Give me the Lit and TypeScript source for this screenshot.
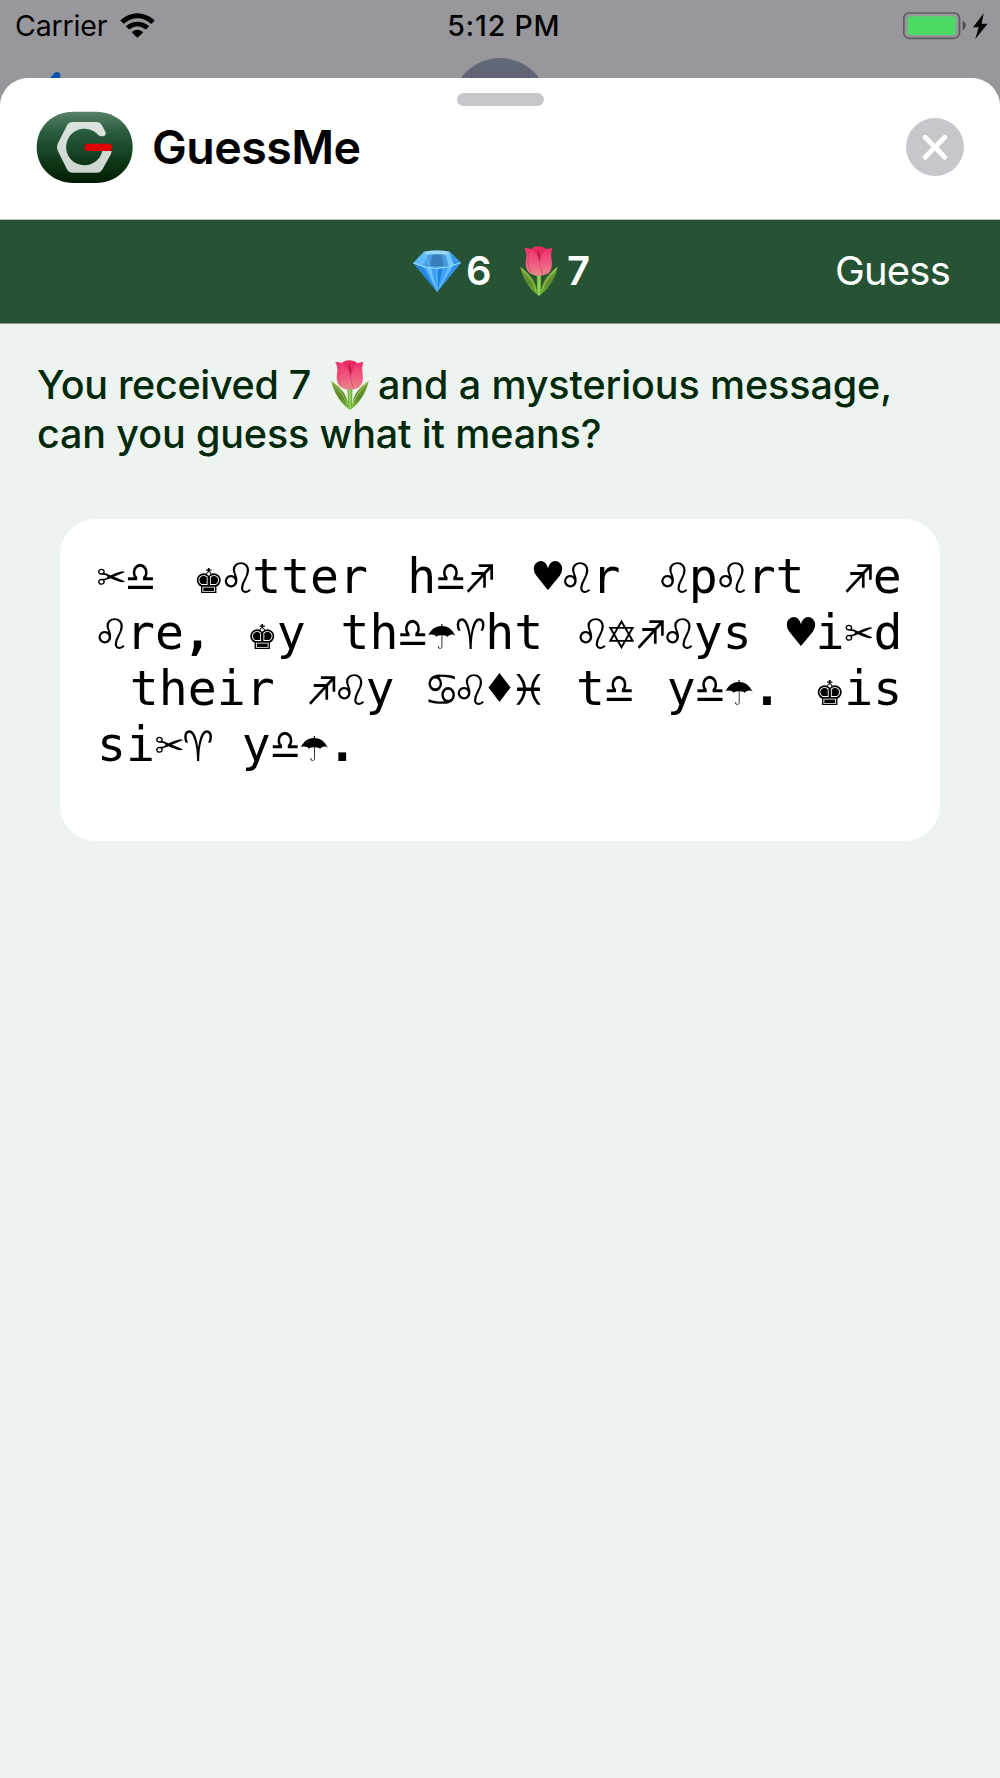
import { LitElement, html, css } from "lit";
import { customElement, property } from "lit/decorators.js";

@customElement("tulip-icon")
class TulipIcon extends LitElement {
  static styles = css`
    :host { display: block; flex: none; width: 38px; height: 50px; }
    svg { display: block; width: 38px; height: 50px; }
  `;
  render() {
    return html`<svg viewBox="0 0 114 150">
      <defs>
        <linearGradient id="petal" x1="0" y1="0" x2="0" y2="1">
          <stop offset="0" stop-color="#f0326c" /><stop offset="0.5" stop-color="#f2567f" /><stop offset="1" stop-color="#e58a8a" />
        </linearGradient>
        <linearGradient id="leaf" x1="0" y1="0" x2="0" y2="1">
          <stop offset="0" stop-color="#7da83e" /><stop offset="0.6" stop-color="#5c8a2c" /><stop offset="1" stop-color="#6fb52f" />
        </linearGradient>
        <linearGradient id="stem" x1="0" y1="0" x2="1" y2="0">
          <stop offset="0" stop-color="#57982c" /><stop offset="0.5" stop-color="#a6df6b" /><stop offset="1" stop-color="#4f9a2a" />
        </linearGradient>
      </defs>
      <path d="M50 86H64L63 146Q57 151 51 146Z" fill="url(#stem)" />
      <path d="M1 62C18 75 43 94 49 122L52 145C37 136 9 105 1 62Z" fill="url(#leaf)" />
      <path d="M113 62C96 75 71 94 66 122L62 145C77 136 105 105 113 62Z" fill="url(#leaf)" />
      <path d="M3 65C18 82 38 101 49 135" fill="none" stroke="#a3c953" stroke-width="3" />
      <path d="M111 65C96 82 76 101 65 135" fill="none" stroke="#b0d34a" stroke-width="3" />
      <path d="M31 11Q41 1 54 1Q69 1 81 11L74 57L40 57Z" fill="#e62d63" />
      <path d="M55 10L43 55L58 83L70 52Z" fill="#c51d49" />
      <path d="M13 6Q31 5 43 16Q55 27 58 48Q62 25 73 15Q83 5 97 6Q91 24 95 43Q99 72 83 83Q68 91 47 89Q20 85 17 58Q17 42 19 31Q19 17 13 6Z" fill="url(#petal)" />
      <path d="M43 17Q58 30 58 50Q61 65 68 87M73 17Q64 27 61 44M24 15Q27 31 24 48Q22 66 33 78" fill="none" stroke="#d73964" stroke-width="2" />
    </svg>`;
  }
}

@customElement("gem-icon")
class GemIcon extends LitElement {
  static styles = css`
    :host { display: block; flex: none; width: 48px; height: 42px; }
    svg { display: block; width: 48px; height: 42px; }
  `;
  render() {
    return html`<svg viewBox="0 0 147 126" preserveAspectRatio="none">
      <path d="M1 39L34 5Q73 -2 112 5L146 38L74 125Z" fill="#4bacf4" />
      <path d="M1 39L34 5L43 15L25 48Z" fill="#5dbaf7" />
      <path d="M34 5Q73 -2 112 5L101 15Q73 10 43 15Z" fill="#9bd9f5" />
      <path d="M43 15Q73 10 101 15L109 49Q74 58 37 49Z" fill="#459bdd" />
      <path d="M60 14H88L94 48H52Z" fill="#377fbb" />
      <path d="M112 5L146 38L109 49L101 15Z" fill="#74c5fb" />
      <path d="M112 5L125 45L146 38Z" fill="#3395ec" />
      <path d="M1 39L31 51L74 125Z" fill="#2685dd" />
      <path d="M31 51Q73 59 109 51L74 125Z" fill="#3ca2f5" />
      <path d="M42 54L74 125L55 55Z" fill="#72c8ff" />
      <path d="M74 57V125L91 54Z" fill="#1e80df" />
      <path d="M109 51L146 38L74 125Z" fill="#68bdff" />
      <path d="M125 45L146 38L74 125Z" fill="#2d92ed" />
      <path d="M1 39Q72 72 146 38" fill="none" stroke="#9ee1ff" stroke-width="3" />
      <path d="M43 15L25 48M101 15L115 48M34 5L52 52M74 57V125" fill="none" stroke="#83d0ff" stroke-width="2" />
    </svg>`;
  }
}

@customElement("phone-status")
class PhoneStatus extends LitElement {
  static styles = css`
    :host { display: grid; grid-template-columns: 1fr auto 1fr; height: 50px; align-items: center; padding: 0 12px 0 15px; box-sizing: border-box; font: 400 28.5px/50px Inter, sans-serif; color: #030303; }
    .left { display: flex; align-items: center; gap: 13px; }
    .carrier { letter-spacing: -0.15px; padding-top: 1px; }
    .time { font-weight: 500; letter-spacing: 0.8px; padding: 1px 0 0 4.5px; }
    .right { display: flex; justify-content: flex-end; }
    .wifi, .battery { display: block; }
  `;
  render() {
    return html`
      <div class="left"><span class="carrier">Carrier</span>
        <svg class="wifi" width="35" height="25" viewBox="0 0 105 75">
          <path d="M2 21Q26 1 52 1Q79 1 103 21Q104 23 102 25L95 32Q93 33 91 31Q73 16 52 16Q32 16 14 31Q12 33 10 31L2 24Q1 22 2 21Z" />
          <path d="M19 38Q34 26 52 26Q71 26 86 38Q88 40 86 42L79 49Q77 50 75 48Q64 40 52 40Q41 40 30 48Q28 50 26 48L19 42Q17 40 19 38Z" />
          <path d="M37 56Q52 45 68 56Q70 58 68 60L54 73Q52 74 50 73L37 60Q35 58 37 56Z" />
        </svg></div>
      <div class="time">5:12 PM</div>
      <div class="right">
        <svg class="battery" width="85" height="28" viewBox="0 0 255 84">
          <rect x="2.5" y="3" width="167" height="76" rx="16" fill="none" stroke="#5c5b5e" stroke-width="5" />
          <rect x="14" y="13" width="144" height="56" rx="8" fill="#4cd964" />
          <path d="M179 26Q188 30 188 40Q188 50 179 55Z" fill="#4e4d50" />
          <path d="M242 4L210 46H227L217 81L254 35H236Z" fill="#050505" />
        </svg>
      </div>`;
  }
}

@customElement("sheet-header")
class SheetHeader extends LitElement {
  static styles = css`
    :host { display: block; height: 142.5px; box-sizing: border-box; background: #fff; border-radius: 28px 28px 0 0; border-bottom: 1px solid #c4c5c7; font-family: Inter, sans-serif; }
    .grabber { width: 87px; height: 13px; border-radius: 7px; background: #c7c6cb; margin: 0 auto; position: relative; top: 15px; }
    .row { display: flex; align-items: center; height: 113px; padding: 0 36.5px 0 36px; }
    .logo { display: block; width: 97px; height: 73px; }
    .title { margin: 0 auto 0 19px; font-weight: 600; font-size: 46.5px; line-height: 60px; letter-spacing: -0.55px; color: #000; }
    .close { width: 58px; height: 58px; padding: 0; border: 0; background: none; }
    .cross { display: block; }
  `;
  render() {
    return html`
      <div class="grabber"></div>
      <div class="row">
        <svg class="logo" viewBox="108 333 291 219">
          <defs>
            <linearGradient id="bg" x1="0" y1="0" x2="0" y2="1">
              <stop offset="0" stop-color="#59806a" /><stop offset="0.3" stop-color="#285b3d" /><stop offset="0.6" stop-color="#154222" /><stop offset="1" stop-color="#001b00" />
            </linearGradient>
            <linearGradient id="letter" x1="0" y1="0" x2="0" y2="1">
              <stop offset="0" stop-color="#dce4df" /><stop offset="1" stop-color="#ccd5ce" />
            </linearGradient>
          </defs>
          <path d="M110 442C110 378 160 335 220 335H288C348 335 398 378 398 442C398 506 348 549 288 549H220C160 549 110 506 110 442Z" fill="url(#bg)" />
          <path d="M216 366H290Q300 366 305 374L317 397Q319 409 306 409Q297 410 292 402A55 55 0 1 0 307 453H335Q334 461 329 469L308 507Q302 518 292 518H216Q207 518 202 510L174 454Q168 442 174 430L202 374Q207 366 216 366Z" fill="url(#letter)" />
          <rect x="254" y="431" width="82" height="22" rx="9" fill="#df0000" />
        </svg>
        <div class="title">GuessMe</div>
        <button class="close" aria-label="Close">
          <svg class="cross" width="58" height="58" viewBox="0 0 58 58"><circle cx="29" cy="29" r="29" fill="#c7c6cb" /><path d="M19.2 19.2L38.8 39.2M38.8 19.2L19.2 39.2" fill="none" stroke="#fff" stroke-width="4.8" stroke-linecap="round" /></svg>
        </button>
      </div>`;
  }
}

@customElement("score-bar")
class ScoreBar extends LitElement {
  @property({ type: Number }) gems = 6;
  @property({ type: Number }) tulips = 7;
  static styles = css`
    :host { display: grid; grid-template-columns: 1fr auto 1fr; align-items: center; height: 104px; box-sizing: border-box; background: #265334; border-bottom: 1px solid #8a9b90; color: #fff; font: 400 40px/50px Inter, sans-serif; padding: 0 50px 2px; }
    .scores { display: flex; align-items: center; grid-column: 2; font-weight: 600; padding-left: 3px; }
    .gem { margin-right: 5px; }
    .tulip { margin: 0 9.5px 0 28px; }
    .guess { justify-self: end; letter-spacing: -0.8px; }
  `;
  render() {
    return html`<div class="scores"><gem-icon class="gem"></gem-icon><span>${this.gems}</span><tulip-icon class="tulip"></tulip-icon><span>${this.tulips}</span></div><div class="guess">Guess</div>`;
  }
}

@customElement("app-root")
class AppRoot extends LitElement {
  private lines = [
    { name: "l1", text: "✂♎ ♚♌tter h♎♐ ♥♌r ♌p♌rt ♐e" },
    { name: "l2", text: "♌re, ♚y th♎☂♈ht ♌✡♐♌ys ♥i✂d" },
    { name: "l3", text: " their ♐♌y ♋♌♦♓ t♎ y♎☂. ♚is" },
    { name: "l4", text: "si✂♈ y♎☂." },
  ];
  static styles = css`
    :host { display: block; width: 1000px; height: 1778px; overflow: hidden; background: #edf4f0; }
    .backdrop { height: 77.5px; position: relative; background: #98979b; box-shadow: 0 30px 0 #98979b; }
    .peek { position: absolute; left: 0; top: 50px; }
    .sheet { position: relative; }
    .prompt { padding: 37px 37px 0; font: 500 39.5px/48.5px Inter, sans-serif; color: #00290c; letter-spacing: -0.14px; }
    .prompt-line { display: flex; height: 48.5px; white-space: pre; }
    .start { letter-spacing: -0.33px; }
    .rest { letter-spacing: -0.11px; }
    .flower { margin: -1px 9px 0 20px; }
    .card { margin: 60.5px 60px 0; height: 322px; box-sizing: border-box; padding: 29px 37px; border-radius: 36px; background: #fff; color: #000; font: 400 48.1px/56.3px "DejaVu Sans Mono", "DejaVu Sans", monospace; }
    .line { white-space: pre; height: 56.3px; }
    .l1 { word-spacing: 10.4px; }
    .l2 { word-spacing: 5.9px; }
    .l3 { word-spacing: 3.9px; }
    .stop { font-weight: 700; position: relative; left: -1px; }
  `;
  private mark(text: string) {
    return text.split(/([.,])/).map((part) => (part === "." || part === "," ? html`<span class="stop">${part}</span>` : part));
  }
  render() {
    return html`
      <div class="backdrop">
        <phone-status></phone-status>
        <svg class="peek" width="1000" height="28" viewBox="0 0 1000 28">
          <defs><linearGradient id="avatar" x1="0" y1="0" x2="0" y2="1"><stop offset="0" stop-color="#656a7b" /><stop offset="0.24" stop-color="#5d6172" /></linearGradient></defs>
          <circle cx="500" cy="56" r="48" fill="url(#avatar)" />
          <path d="M50 28L55 22.5Q58 21 60 23.5Q61 25 60 28Z" fill="#0654ad" />
        </svg>
      </div>
      <main class="sheet">
        <sheet-header></sheet-header>
        <score-bar .gems=${6} .tulips=${7}></score-bar>
        <div class="prompt">
          <div class="prompt-line"><span class="start">You received 7</span><tulip-icon class="flower"></tulip-icon><span class="rest">and a mysterious message,</span></div>
          <div class="prompt-line">can you guess what it means?</div>
        </div>
        <div class="card">${this.lines.map((l) => html`<div class="line ${l.name}">${this.mark(l.text)}</div>`)}</div>
      </main>`;
  }
}
